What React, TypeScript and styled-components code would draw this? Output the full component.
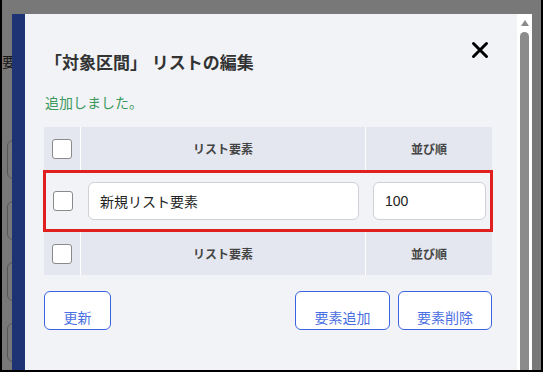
import styled, { createGlobalStyle } from 'styled-components'

const GlobalStyle = createGlobalStyle`
  html, body {
    margin: 0;
    padding: 0;
  }
  body {
    font-family: "Liberation Sans", "Noto Sans CJK JP", sans-serif;
  }
  * {
    box-sizing: border-box;
  }
`

const Screen = styled.div`
  position: relative;
  width: 543px;
  height: 372px;
  border: 2px solid #000;
  border-top: 0;
  background: #fff;
  overflow: hidden;
`

// the page that lies under the dialog
const UnderPage = styled.div`
  display: flex;
  flex-direction: column;
  padding: 52px 0 0 5px;
`

const UnderLabel = styled.div`
  margin-left: -47px;
  font-size: 14px;
  line-height: 20px;
  color: #333;
  margin-bottom: 68px;
`

const UnderField = styled.div`
  width: 120px;
  height: 39px;
  border: 1px solid #b8b8b8;
  border-radius: 6px;
  margin-bottom: 22px;
`

const Backdrop = styled.div`
  position: absolute;
  inset: 0;
  background: rgba(0, 0, 0, 0.53);
`

const Modal = styled.div`
  position: absolute;
  left: 10px;
  top: 14px;
  bottom: 0;
  width: 520px;
  display: flex;
  border-left: 13px solid #1d3373;
  background: #f2f3f7;
`

const Content = styled.div`
  flex: 1;
  padding: 28px 25px 0 19px;
`

const Header = styled.div`
  display: flex;
  justify-content: space-between;
  align-items: flex-start;
`

const Title = styled.h2`
  margin: 10px 0 0 1px;
  font-size: 17px;
  line-height: 24px;
  font-weight: 700;
  color: #333;
`

const Close = styled.button`
  width: 18px;
  height: 18px;
  margin: -1px 3px 0 0;
  padding: 0;
  border: 0;
  background: none;
  display: flex;
`

const Message = styled.p`
  margin: 18px 0 0 1px;
  font-size: 14px;
  line-height: 18px;
  color: #3d9a5c;
`

const Table = styled.div`
  margin-top: 15px;
  display: flex;
  flex-direction: column;
`

const Row = styled.div<{ $edit?: boolean }>`
  display: grid;
  grid-template-columns: ${(p) => (p.$edit ? '34px 284px 124px' : '36px 284px 126px')};
  column-gap: 1px;
  height: ${(p) => (p.$edit ? '62px' : '43px')};
  background: ${(p) => (p.$edit ? 'transparent' : '#fff')};
  border: ${(p) => (p.$edit ? '3px solid #e01f1f' : '0')};
  margin: ${(p) => (p.$edit ? '0 -1px' : '0')};
`

const Cell = styled.div<{ $head?: boolean; $center?: boolean }>`
  display: flex;
  align-items: center;
  justify-content: ${(p) => (p.$center ? 'center' : 'flex-start')};
  padding-left: ${(p) => (p.$center ? '0' : '7px')};
  background: ${(p) => (p.$head ? '#e4e7ef' : 'transparent')};
  font-size: 12px;
  font-weight: 700;
  color: #444;
`

const Check = styled.span`
  width: 20px;
  height: 20px;
  background: #fff;
  border: 1px solid #8a8a8a;
  border-radius: 3px;
`

const Field = styled.div<{ $w: number }>`
  width: ${(p) => p.$w}px;
  height: 38px;
  display: flex;
  align-items: center;
  padding-left: 11px;
  background: #fff;
  border: 1px solid #cfd1d6;
  border-radius: 6px;
  font-size: 14px;
  font-weight: 400;
  color: #222;
`

const Actions = styled.div`
  margin-top: 16px;
  display: flex;
  justify-content: space-between;
`

const Group = styled.div`
  display: flex;
  gap: 8px;
`

const Button = styled.button<{ $w: number }>`
  width: ${(p) => p.$w}px;
  height: 39px;
  padding: 0 0 1px;
  display: flex;
  align-items: flex-end;
  justify-content: center;
  background: #fff;
  border: 1px solid #3a63e0;
  border-radius: 6px;
  font-family: inherit;
  font-size: 14px;
  line-height: 20px;
  color: #4a6fe2;
`

const Scrollbar = styled.div`
  width: 15px;
  background: #fff;
  display: flex;
  flex-direction: column;
  align-items: center;
  padding-top: 6px;
`

const Arrow = styled.span`
  width: 0;
  height: 0;
  border-left: 4px solid transparent;
  border-right: 4px solid transparent;
  border-bottom: 6px solid #8a8a8a;
`

const Thumb = styled.span`
  margin-top: 6px;
  width: 9px;
  flex: 1;
  border-radius: 5px 5px 0 0;
  background: #8b8b8b;
`

function HeadRow() {
  return (
    <Row>
      <Cell $head $center><Check /></Cell>
      <Cell $head $center>リスト要素</Cell>
      <Cell $head $center>並び順</Cell>
    </Row>
  )
}

export default function App() {
  return (
    <Screen>
      <GlobalStyle />
      <UnderPage>
        <UnderLabel>リスト要</UnderLabel>
        <UnderField />
        <UnderField />
        <UnderField />
        <UnderField />
      </UnderPage>
      <Backdrop />

      <Modal>
        <Content>
          <Header>
            <Title>「対象区間」 リストの編集</Title>
            <Close aria-label="close">
              <svg width="18" height="18" viewBox="0 0 18 18">
                <path d="M2.5 2.5 L15.5 15.5 M15.5 2.5 L2.5 15.5" stroke="#000" strokeWidth="3" strokeLinecap="round" />
              </svg>
            </Close>
          </Header>
          <Message>追加しました。</Message>

          <Table>
            <HeadRow />
            <Row $edit>
              <Cell $center><Check /></Cell>
              <Cell><Field $w={271}>新規リスト要素</Field></Cell>
              <Cell><Field $w={113}>100</Field></Cell>
            </Row>
            <HeadRow />
          </Table>

          <Actions>
            <Button $w={67}>更新</Button>
            <Group>
              <Button $w={95}>要素追加</Button>
              <Button $w={94}>要素削除</Button>
            </Group>
          </Actions>
        </Content>
        <Scrollbar>
          <Arrow />
          <Thumb />
        </Scrollbar>
      </Modal>
    </Screen>
  )
}
